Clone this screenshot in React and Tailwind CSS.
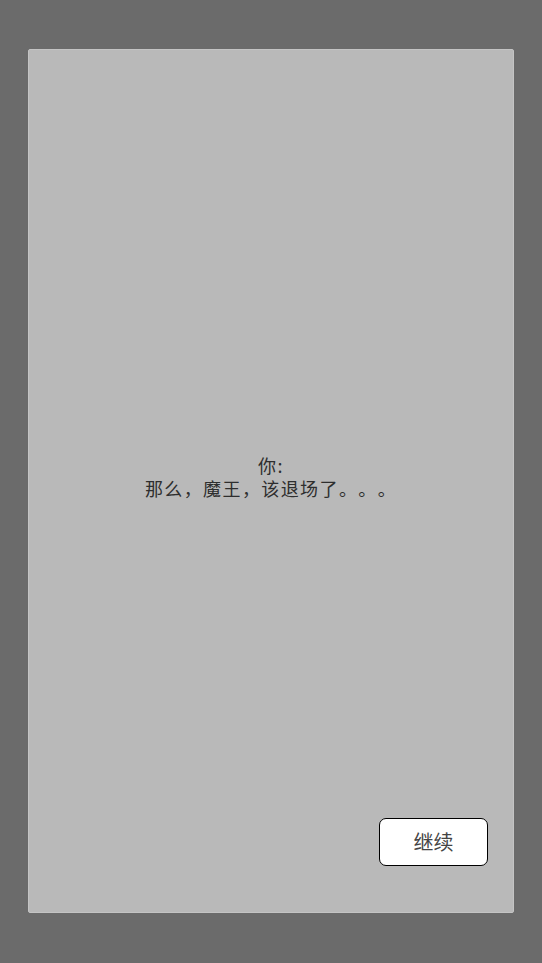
export default function App() {
  return (
    <div className="w-[542px] h-[963px] bg-[#6b6b6b] pt-[49px] pl-[28px] pr-[28px] pb-[50px]" style={{ fontFamily: '"Noto Sans CJK SC", "Noto Sans", sans-serif' }}>
      <div className="w-full h-full bg-[#b9b9b9] border border-[#c4c4c4] rounded-[2px] grid">
        <div className="[grid-area:1/1] flex flex-col items-center justify-center pb-[8px] text-[18px] leading-[23px] tracking-[1.4px] text-[#2e2e2e] [text-spacing-trim:space-all]">
          <div>你:</div>
          <div>那么，魔王，该退场了。。。</div>
        </div>
        <div className="[grid-area:1/1] flex items-end justify-end pr-[25px] pb-[46px]">
          <button className="w-[109px] h-[48px] bg-white border border-black border-b-[1.5px] rounded-[7px] text-[20px] text-[#444444] flex items-center justify-center">
            继续
          </button>
        </div>
      </div>
    </div>
  );
}
